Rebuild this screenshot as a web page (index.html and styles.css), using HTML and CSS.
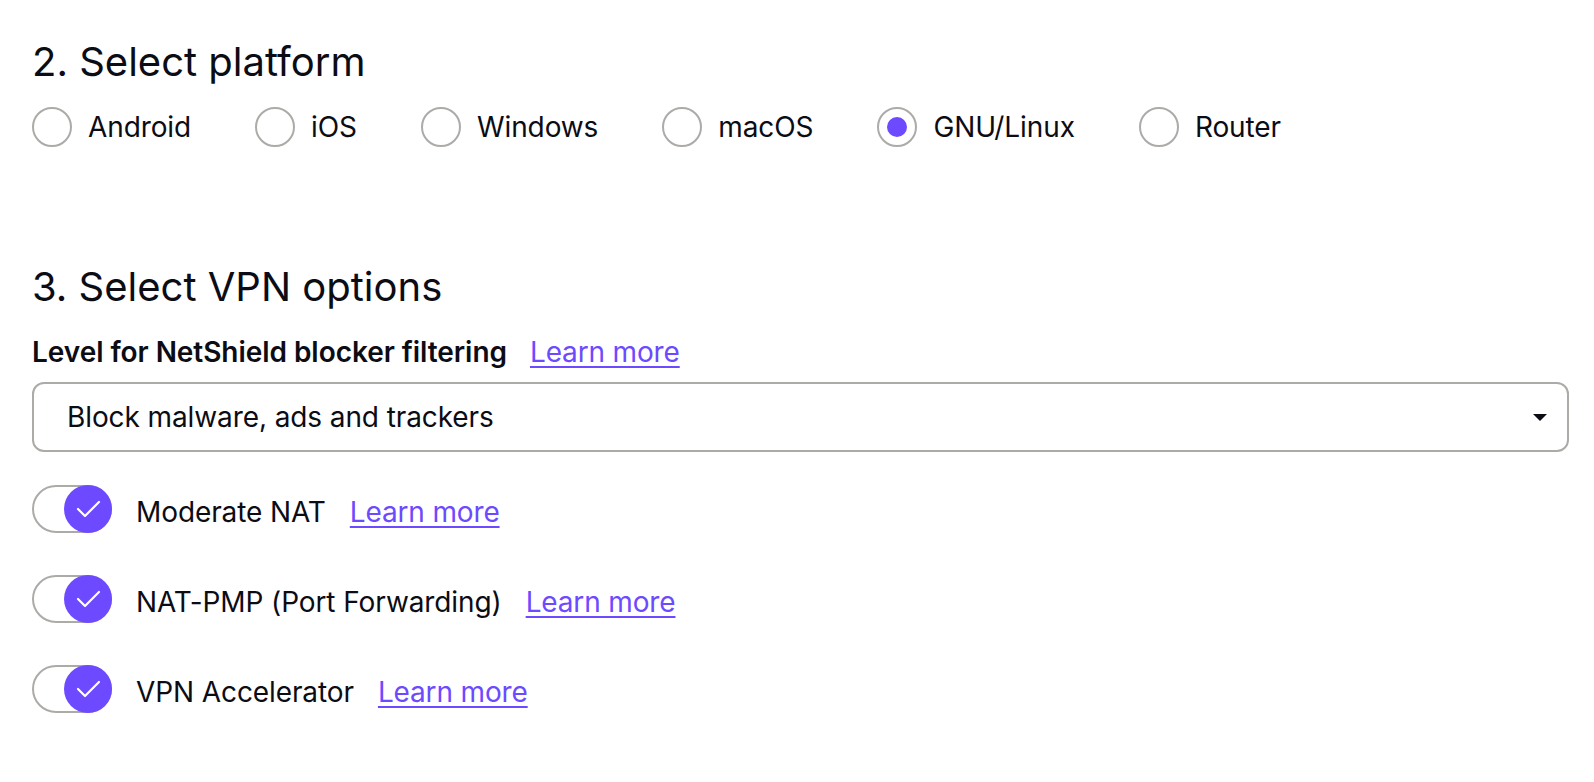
FILE: index.html
```html
<!DOCTYPE html>
<html lang="en">
<head>
<meta charset="utf-8">
<title>VPN configuration</title>
<link rel="stylesheet" href="styles.css">
</head>
<body>
<main class="page">
  <section class="step">
    <h2 class="step-title">2. Select platform</h2>
    <div class="radio-row">
      <label class="radio"><input type="radio" name="platform"><span>Android</span></label>
      <label class="radio"><input type="radio" name="platform"><span>iOS</span></label>
      <label class="radio"><input type="radio" name="platform"><span>Windows</span></label>
      <label class="radio"><input type="radio" name="platform"><span>macOS</span></label>
      <label class="radio"><input type="radio" name="platform" checked><span>GNU/Linux</span></label>
      <label class="radio"><input type="radio" name="platform"><span>Router</span></label>
    </div>
  </section>

  <section class="step step-vpn">
    <h2 class="step-title">3. Select VPN options</h2>
    <div class="field-label">
      <span class="label-strong">Level for NetShield blocker filtering</span>
      <a class="link" href="#">Learn more</a>
    </div>
    <div class="select">
      <span class="select-value">Block malware, ads and trackers</span>
      <span class="select-caret"></span>
    </div>

    <div class="toggle-list">
      <div class="toggle-row">
        <span class="toggle"><span class="knob"><svg viewBox="0 0 48 48" width="48" height="48"><path d="M14 24 L21 31 L35 17" fill="none" stroke="#fff" stroke-width="2.2" stroke-linecap="round" stroke-linejoin="round"/></svg></span></span>
        <span class="toggle-text">Moderate NAT</span>
        <a class="link toggle-link" href="#">Learn more</a>
      </div>
      <div class="toggle-row">
        <span class="toggle"><span class="knob"><svg viewBox="0 0 48 48" width="48" height="48"><path d="M14 24 L21 31 L35 17" fill="none" stroke="#fff" stroke-width="2.2" stroke-linecap="round" stroke-linejoin="round"/></svg></span></span>
        <span class="toggle-text">NAT-PMP (Port Forwarding)</span>
        <a class="link toggle-link" href="#">Learn more</a>
      </div>
      <div class="toggle-row">
        <span class="toggle"><span class="knob"><svg viewBox="0 0 48 48" width="48" height="48"><path d="M14 24 L21 31 L35 17" fill="none" stroke="#fff" stroke-width="2.2" stroke-linecap="round" stroke-linejoin="round"/></svg></span></span>
        <span class="toggle-text">VPN Accelerator</span>
        <a class="link toggle-link" href="#">Learn more</a>
      </div>
    </div>
  </section>
</main>
</body>
</html>
```

FILE: styles.css
```css
* { box-sizing: border-box; }

html, body {
  margin: 0;
  background: #ffffff;
}

body {
  font-family: Inter, "Noto Sans", "Liberation Sans", sans-serif;
  color: #0c0c14;
  font-size: 28px;
  line-height: 42px;
  letter-spacing: -0.1px;
}

.page {
  padding: 38px 25px 0 32px;
}

.step-title {
  margin: 0;
  font-size: 40px;
  line-height: 48px;
  font-weight: 400;
  letter-spacing: 0;
}

.radio-row {
  display: flex;
  align-items: center;
  gap: 64px;
  margin-top: 21px;
}

.radio {
  display: flex;
  align-items: center;
  gap: 16px;
  height: 40px;
}

.radio input {
  appearance: none;
  -webkit-appearance: none;
  margin: 0;
  width: 40px;
  height: 40px;
  border: 2px solid #adaba8;
  border-radius: 50%;
  background: #fff;
  display: grid;
  place-items: center;
}

.radio input:checked::after {
  content: "";
  width: 20px;
  height: 20px;
  border-radius: 50%;
  background: #6d4aff;
}

.step-vpn {
  margin-top: 116px;
}

.field-label {
  display: flex;
  gap: 23px;
  margin-top: 20px;
}

.label-strong {
  font-weight: 600;
  letter-spacing: -0.05px;
}

.link {
  color: #6d4aff;
  text-decoration: underline;
  text-underline-offset: 4px;
  text-decoration-thickness: 1.5px;
  letter-spacing: -0.15px;
}

.select {
  margin-top: 9px;
  height: 70px;
  border: 2px solid #adaba8;
  border-radius: 12px;
  display: flex;
  align-items: center;
  justify-content: space-between;
  padding: 0 20px 0 33px;
}

.select-caret {
  width: 0;
  height: 0;
  border-left: 7px solid transparent;
  border-right: 7px solid transparent;
  border-top: 7px solid #0c0c14;
}

.toggle-list {
  margin-top: 33px;
  display: flex;
  flex-direction: column;
  gap: 42px;
}

.toggle-row {
  display: flex;
  align-items: center;
  height: 48px;
}

.toggle {
  width: 80px;
  height: 48px;
  border: 2px solid #adaba8;
  border-radius: 24px;
  background: #fff;
  position: relative;
  flex: none;
}

.knob {
  position: absolute;
  top: -2px;
  right: -2px;
  width: 48px;
  height: 48px;
  border-radius: 50%;
  background: #6d4aff;
  display: block;
}

.knob svg {
  display: block;
}

.toggle-text,
.toggle-link {
  margin-top: 6px;
}

.toggle-text {
  margin-left: 24px;
  margin-right: 24px;
}
```
